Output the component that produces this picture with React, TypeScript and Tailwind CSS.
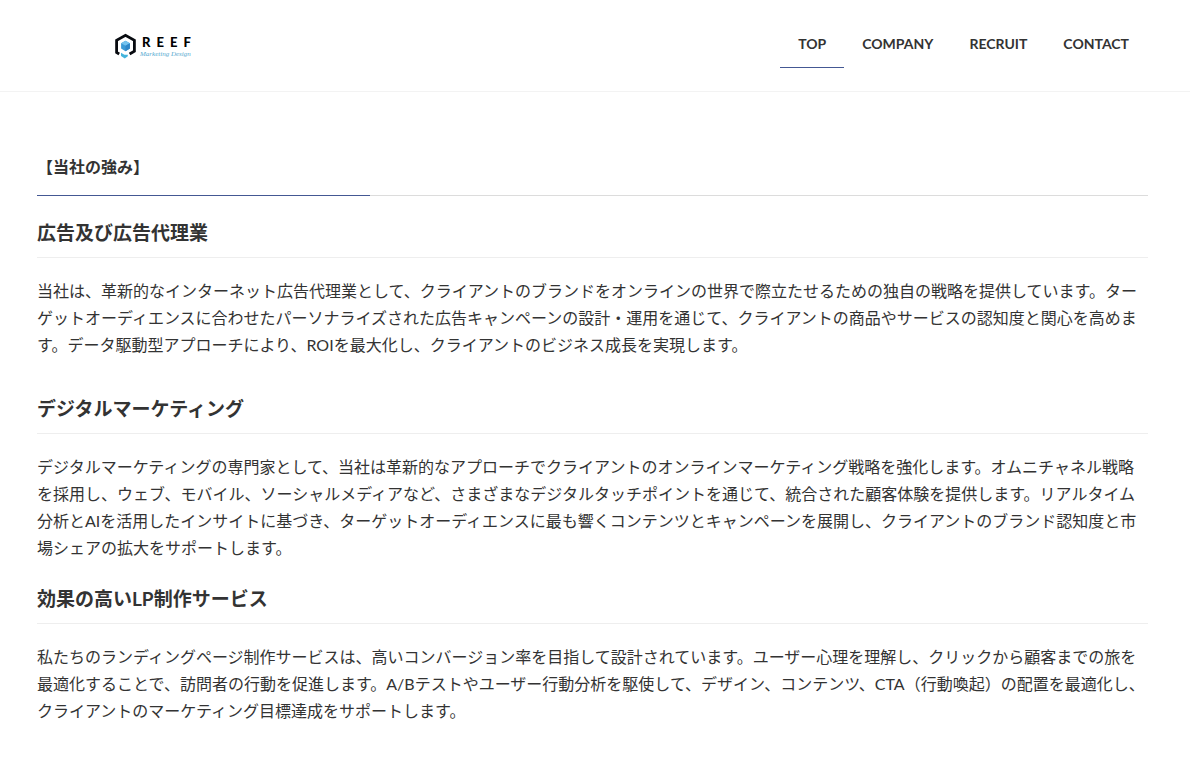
const navItems = ['TOP', 'COMPANY', 'RECRUIT', 'CONTACT'];

const sections = [
  {
    title: '広告及び広告代理業',
    body: '当社は、革新的なインターネット広告代理業として、クライアントのブランドをオンラインの世界で際立たせるための独自の戦略を提供しています。ターゲットオーディエンスに合わせたパーソナライズされた広告キャンペーンの設計・運用を通じて、クライアントの商品やサービスの認知度と関心を高めます。データ駆動型アプローチにより、ROIを最大化し、クライアントのビジネス成長を実現します。',
    spacing: 'mb-[37px]',
  },
  {
    title: 'デジタルマーケティング',
    body: 'デジタルマーケティングの専門家として、当社は革新的なアプローチでクライアントのオンラインマーケティング戦略を強化します。オムニチャネル戦略を採用し、ウェブ、モバイル、ソーシャルメディアなど、さまざまなデジタルタッチポイントを通じて、統合された顧客体験を提供します。リアルタイム分析とAIを活用したインサイトに基づき、ターゲットオーディエンスに最も響くコンテンツとキャンペーンを展開し、クライアントのブランド認知度と市場シェアの拡大をサポートします。',
    spacing: 'mb-6',
  },
  {
    title: '効果の高いLP制作サービス',
    body: '私たちのランディングページ制作サービスは、高いコンバージョン率を目指して設計されています。ユーザー心理を理解し、クリックから顧客までの旅を最適化することで、訪問者の行動を促進します。A/Bテストやユーザー行動分析を駆使して、デザイン、コンテンツ、CTA（行動喚起）の配置を最適化し、クライアントのマーケティング目標達成をサポートします。',
    spacing: 'mb-9',
  },
];

function Logo() {
  return (
    <a href="#" aria-label="REEF Marketing Design" className="flex items-center gap-1">
      <svg viewBox="0 0 22 26" className="h-[26px] w-[22px]" aria-hidden="true">
        <path
          d="M5.2 21 2.6 19.4V7.4L11.5 2.4l8.9 5v10.8L15.6 21"
          fill="none"
          stroke="#080b10"
          strokeWidth="2.8"
        />
        <path d="m11.5 7.7 4.4 2.5v5.4l-4.4 2.6-4.4-2.6v-5.4z" fill="#3b9ad6" />
        <path d="m11.5 7.7 4.4 2.5-4.4 2.6-4.4-2.6z" fill="#73c2ee" />
        <path d="m11.5 12.8 4.4-2.6v5.4l-4.4 2.6z" fill="#2f86c8" />
        <path d="m7 19.8 3.4 1.9h3.4v1.6l-3 2.1L7 22.9z" fill="#43b4dc" />
      </svg>
      <span className="flex flex-col">
        <span className="flex gap-1.5 pl-0.5 text-[13px] leading-4 font-black text-black">
          <span>R</span>
          <span>E</span>
          <span>E</span>
          <span>F</span>
        </span>
        <span className="font-['Liberation_Serif',serif] text-[7px] leading-2 text-[#56a9cf] italic">
          Marketing Design
        </span>
      </span>
    </a>
  );
}

export default function App() {
  return (
    <div className="bg-white font-['Lato','Noto_Sans_CJK_JP',sans-serif] text-[#333333]" lang="ja">
      <header className="border-b border-[#f3f3f3] pr-[43px] pl-[114px]">
        <div className="flex h-[91px] items-center justify-between">
          <Logo />
          <nav className="flex text-[14px] leading-6 font-bold">
            {navItems.map((item, i) => (
              <a
                key={item}
                href="#"
                aria-current={i === 0 ? 'page' : undefined}
                className={
                  i === 0
                    ? 'border-b border-[#445893] px-[18px] pt-[9px] pb-[11px]'
                    : 'border-b border-transparent px-[18px] pt-[9px] pb-[11px]'
                }
              >
                {item}
              </a>
            ))}
          </nav>
        </div>
      </header>

      <main className="pt-[63px] pr-[42px] pb-2 pl-[37px]">
        <h1 className="text-[16px] leading-6 font-bold">【当社の強み】</h1>
        <div className="mt-4 mb-[23px] flex h-px bg-[#dcdcdc]">
          <div className="w-3/10 bg-[#445893]" />
        </div>
        {sections.map((s) => (
          <section key={s.title} className={s.spacing}>
            <h2 className="border-b border-[#eeeeee] pb-[11px] text-[19px] leading-[27px] font-bold">
              {s.title}
            </h2>
            <p className="mt-[19px] text-[16px] leading-[27px]">{s.body}</p>
          </section>
        ))}
      </main>
    </div>
  );
}
